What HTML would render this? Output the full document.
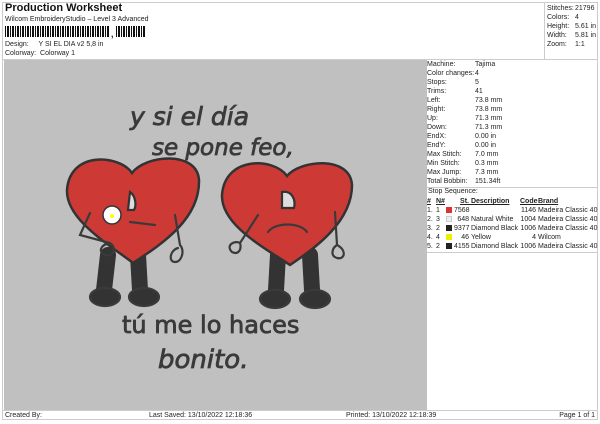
<!DOCTYPE html>
<html><head><style>
body{margin:0;width:600px;height:424px;background:#fff;font-family:"Liberation Sans",sans-serif;color:#222;position:relative;overflow:hidden;font-size:7px}
.a{position:absolute;white-space:nowrap}
.bar{position:absolute;background:repeating-linear-gradient(90deg,#111 0 1px,#fff 1px 2px,#111 2px 3px,#111 3px 4px,#fff 4px 5px)}
table{border-collapse:collapse;font-size:7px}
td{padding:0;height:9px;line-height:9px;white-space:nowrap;overflow:visible}
.sq{display:inline-block;width:6px;height:6px;vertical-align:-1px}
</style></head><body>
<div style="position:absolute;left:2px;top:2px;width:596px;height:418px;border:1px solid #ccc;box-sizing:border-box"></div>
<div class="a" style="left:5px;top:2px;font-size:11px;font-weight:bold;color:#111">Production Worksheet</div>
<div class="a" style="left:5px;top:16px">Wilcom EmbroideryStudio – Level 3 Advanced</div>
<div class="bar" style="left:5px;top:26px;width:105px;height:11px"></div>
<div class="a" style="left:111px;top:29px;font-size:9px;font-weight:bold">,</div>
<div class="bar" style="left:116px;top:26px;width:29px;height:11px"></div>
<div class="a" style="left:5px;top:41px">Design:&nbsp;&nbsp;&nbsp;&nbsp;&nbsp;Y SI EL DIA v2 5,8 in</div>
<div class="a" style="left:5px;top:50px">Colorway:&nbsp;&nbsp;Colorway 1</div>
<div style="position:absolute;left:544px;top:2px;width:1px;height:57px;background:#ccc"></div>
<div class="a" style="left:547px;top:4px;line-height:9px">Stitches:<br>Colors:<br>Height:<br>Width:<br>Zoom:</div>
<div class="a" style="left:575px;top:4px;line-height:9px">21796<br>4<br>5.61 in<br>5.81 in<br>1:1</div>
<div style="position:absolute;left:2px;top:59px;width:596px;height:1px;background:#ccc"></div>
<div style="position:absolute;left:4px;top:60px;width:423px;height:350px;background:#c0c0c0"></div>
<svg style="position:absolute;left:4px;top:60px" width="423" height="350" viewBox="4 60 423 350">
<g fill="none" stroke="#3a3a3a" stroke-width="2.2" stroke-linecap="round">
<text x="130" y="125" font-family="DejaVu Sans" font-size="25" fill="#3a3a3a" stroke="#3a3a3a" stroke-width="0.8" font-style="italic">y si el día</text>
<text x="152" y="155" font-family="DejaVu Sans" font-size="23" fill="#3a3a3a" stroke="#3a3a3a" stroke-width="0.8" font-style="italic">se pone feo,</text>
<text x="122" y="333" font-family="DejaVu Sans" font-size="24" fill="#3a3a3a" stroke="#3a3a3a" stroke-width="0.8">tú me lo haces</text>
<text x="158" y="368" font-family="DejaVu Sans" font-size="26" fill="#3a3a3a" stroke="#3a3a3a" stroke-width="0.8" font-style="italic">bonito.</text>
<path d="M108 255 L104 290 M138 255 L140 290 M278 255 L276 290 M310 255 L312 290" stroke="#333" stroke-width="16"/>
<ellipse cx="105" cy="297" rx="15" ry="9" fill="#333"/><ellipse cx="144" cy="297" rx="15" ry="9" fill="#333"/>
<ellipse cx="275" cy="299" rx="15" ry="9" fill="#333"/><ellipse cx="315" cy="299" rx="15" ry="9" fill="#333"/>
<path d="M132 173 C120 155 70 150 67 190 C66 220 110 245 133 263 C160 245 200 220 199 180 C197 150 145 155 132 173Z" fill="#cd3a36" stroke="#333" stroke-width="2.5"/>
<path d="M287 176 C275 158 225 155 222 195 C221 225 265 248 290 265 C315 248 352 222 352 185 C350 155 300 160 287 176Z" fill="#cd3a36" stroke="#333" stroke-width="2.5"/>
<path d="M130 192 C135 195 137 205 134 210 L128 210Z" fill="#ddd" stroke="#333"/>
<path d="M282 192 C292 190 296 200 294 208 L282 208Z" fill="#ddd" stroke="#333"/>
<path d="M268 232 C275 222 300 222 307 232"/>
<path d="M130 222 L155 225"/>
<path d="M175 215 L180 245 C185 250 182 262 175 262 C168 262 170 250 178 248"/>
<path d="M240 243 C235 240 225 245 232 252 C238 255 242 250 240 243 L258 215"/>
<path d="M335 212 L337 245 C347 250 345 260 337 258 C330 256 332 248 337 245"/>
<path d="M90 213 L80 235 L110 243 C118 248 112 258 105 255 C98 252 100 245 110 243"/>
<circle cx="112" cy="215" r="9" fill="#fff" stroke="#333" stroke-width="1.5"/>
<circle cx="112" cy="216" r="2" fill="#ff0" stroke="none"/>
</g></svg>
<div style="position:absolute;left:427px;top:60px;width:171px;height:350px">
<table style="position:absolute;left:0;top:0;width:171px">
<tr><td style="width:48px">Machine:</td><td>Tajima</td></tr>
<tr><td>Color changes:</td><td>4</td></tr>
<tr><td>Stops:</td><td>5</td></tr>
<tr><td>Trims:</td><td>41</td></tr>
<tr><td>Left:</td><td>73.8 mm</td></tr>
<tr><td>Right:</td><td>73.8 mm</td></tr>
<tr><td>Up:</td><td>71.3 mm</td></tr>
<tr><td>Down:</td><td>71.3 mm</td></tr>
<tr><td>EndX:</td><td>0.00 in</td></tr>
<tr><td>EndY:</td><td>0.00 in</td></tr>
<tr><td>Max Stitch:</td><td>7.0 mm</td></tr>
<tr><td>Min Stitch:</td><td>0.3 mm</td></tr>
<tr><td>Max Jump:</td><td>7.3 mm</td></tr>
<tr><td>Total Bobbin:</td><td>151.34ft</td></tr>
</table>
<div style="position:absolute;left:0;top:127px;width:171px;height:1px;background:#ccc"></div>
<div class="a" style="left:1px;top:128px">Stop Sequence:</div>
<table style="position:absolute;left:0;top:137px;width:171px;table-layout:fixed">
<colgroup><col style="width:9px"><col style="width:10px"><col style="width:8px"><col style="width:15px"><col style="width:51px"><col style="width:16px"><col style="width:62px"></colgroup>
<tr style="font-weight:bold;text-decoration:underline"><td>#</td><td>N#</td><td></td><td style="text-align:right">St.</td><td>&nbsp;Description</td><td style="text-align:right">Code</td><td>&nbsp;Brand</td></tr>
<tr><td>1.</td><td>1</td><td><span class="sq" style="background:#d33"></span></td><td style="text-align:right">7568</td><td></td><td style="text-align:right">1146</td><td>&nbsp;Madeira Classic 40</td></tr>
<tr><td>2.</td><td>3</td><td><span class="sq" style="background:#eee;border:1px solid #ccc;box-sizing:border-box"></span></td><td style="text-align:right">648</td><td>&nbsp;Natural White</td><td style="text-align:right">1004</td><td>&nbsp;Madeira Classic 40</td></tr>
<tr><td>3.</td><td>2</td><td><span class="sq" style="background:#222"></span></td><td style="text-align:right">9377</td><td>&nbsp;Diamond Black</td><td style="text-align:right">1006</td><td>&nbsp;Madeira Classic 40</td></tr>
<tr><td>4.</td><td>4</td><td><span class="sq" style="background:#ee0"></span></td><td style="text-align:right">46</td><td>&nbsp;Yellow</td><td style="text-align:right">4</td><td>&nbsp;Wilcom</td></tr>
<tr><td>5.</td><td>2</td><td><span class="sq" style="background:#222"></span></td><td style="text-align:right">4155</td><td>&nbsp;Diamond Black</td><td style="text-align:right">1006</td><td>&nbsp;Madeira Classic 40</td></tr>
</table>
<div style="position:absolute;left:0;top:192px;width:171px;height:1px;background:#ccc"></div>
</div>
<div style="position:absolute;left:2px;top:410px;width:596px;height:1px;background:#ccc"></div>
<div class="a" style="left:5px;top:412px">Created By:</div>
<div class="a" style="left:149px;top:412px">Last Saved: 13/10/2022 12:18:36</div>
<div class="a" style="left:346px;top:412px">Printed: 13/10/2022 12:18:39</div>
<div class="a" style="right:5px;top:412px">Page 1 of 1</div>
</body></html>
